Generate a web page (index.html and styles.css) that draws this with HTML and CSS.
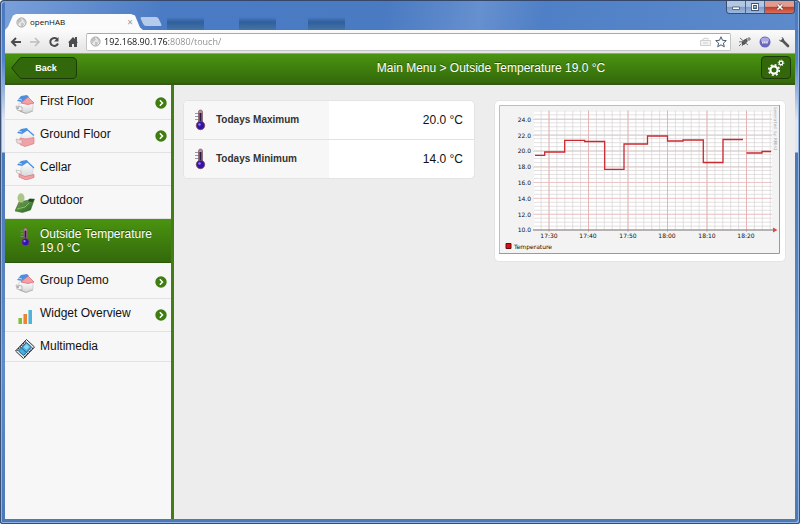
FILE: index.html
```html
<!DOCTYPE html>
<html lang="en">
<head>
    <meta charset="UTF-8">
    <meta name="viewport" content="width=device-width, initial-scale=1.0">
    <title>openHAB</title>
    <link rel="stylesheet" href="styles.css">
</head>
<body>
    <!-- shared icons -->
    <svg class="defs" width="0" height="0" aria-hidden="true">
        <defs>
            <linearGradient id="wall" x1="0" y1="0" x2="0" y2="1">
                <stop offset="0" stop-color="#ffffff"/>
                <stop offset="1" stop-color="#d3d6d8"/>
            </linearGradient>
            <linearGradient id="grass" x1="0" y1="0" x2="1" y2="1">
                <stop offset="0" stop-color="#7cb35a"/>
                <stop offset="1" stop-color="#235f22"/>
            </linearGradient>
        </defs>
        <symbol id="globe" viewBox="0 0 12 12">
            <circle cx="6" cy="6" r="5" fill="#e9e9e9" stroke="#9a9a9a"/>
            <path d="M2 3.2 4.5 2l1.6 1.3-1.3 1.9-1.7.6L2.5 8M7 2l2.5 1.6-.8 1.6 1.3 1M6 6.500l2.200.9-.8 2.200-1.300.5z" fill="#c2c2c2" stroke="#b0b0b0" stroke-width=".5"/>
        </symbol>
        <symbol id="arrow" viewBox="0 0 12 12">
            <circle cx="6" cy="6" r="5.700" fill="#3f7d10"/>
            <path d="M4.800 3.300 7.500 6 4.800 8.700" fill="none" stroke="#fff" stroke-width="1.500"/>
        </symbol>
        <symbol id="house-first" viewBox="0 0 20 20">
            <path d="M4 9l14-1v8l-8 3-6-2z" fill="url(#wall)" stroke="#bbb" stroke-width=".5"/>
            <path d="M2 7l4-5 6-1 2 2-7 5z" fill="#4a8fe0"/>
            <path d="M3 5l4 1" stroke="#b9d7f7" stroke-width="1"/>
            <path d="M6 9l7-6 6 6-6 1.500z" fill="#f2a2a7" stroke="#d8636c" stroke-width=".7"/>
            <path d="M1 12l6 1v4l-5-1z" fill="#f3f3f3" stroke="#999" stroke-width=".6"/>
            <path d="M2 14h2" stroke="#555" stroke-width=".8"/>
            <path d="M5 17l6 2.500 7-2.500" fill="none" stroke="#999" stroke-width=".7"/>
        </symbol>
        <symbol id="house-ground" viewBox="0 0 20 20">
            <path d="M6 8l7-5 5 6v8l-8 2-4-2z" fill="url(#wall)" stroke="#ccc" stroke-width=".5"/>
            <path d="M2 6l4-4 6-1 1 2-6 4z" fill="#4a8fe0"/>
            <path d="M3 4l4 1" stroke="#b9d7f7" stroke-width="1"/>
            <path d="M12 2.500 19 8.500" stroke="#4a8fe0" stroke-width="1.200"/>
            <path d="M5 11l6 1 8-1.500v6l-9 3-5-2z" fill="#f0a3a7" stroke="#d8737a" stroke-width=".6"/>
            <path d="M1 12l6 1v4l-5-1z" fill="#f6d5d6" stroke="#aaa" stroke-width=".6"/>
        </symbol>
        <symbol id="house-cellar" viewBox="0 0 20 20">
            <path d="M6 7l7-5 5 6v7l-8 2-4-2z" fill="url(#wall)" stroke="#ccc" stroke-width=".5"/>
            <path d="M2 5l4-4 6-1 1 2-6 4z" fill="#4a8fe0"/>
            <path d="M3 3l4 1" stroke="#b9d7f7" stroke-width="1"/>
            <path d="M12 1.500 19 8" stroke="#4a8fe0" stroke-width="1.200"/>
            <path d="M1 10l5 1v3l-4-1z" fill="#f3f3f3" stroke="#aaa" stroke-width=".6"/>
            <path d="M4 14l6 2.500 9-2v3l-8 2.500-7-3z" fill="#f0a3a7" stroke="#d8636c" stroke-width=".6"/>
        </symbol>
        <symbol id="garden" viewBox="0 0 20 20">
            <path d="M4 9l15.500-3-4 11-8 2.500L0 18z" fill="url(#grass)" stroke="#2c5a28" stroke-width=".5"/>
            <path d="M6 6v7" stroke="#8a6a3c" stroke-width="1.200"/>
            <ellipse cx="6" cy="5" rx="3.500" ry="4.700" fill="#adc688"/>
            <path d="M13 7l2-1.500 4 .5-1 3-4-.5z" fill="#214f20"/>
            <path d="M2 16l8-2 4-4" fill="none" stroke="#86c45e" stroke-width="1"/>
        </symbol>
        <symbol id="thermometer" viewBox="0 0 12 22">
            <path d="M1 4.500h4M1 7.500h4M1 10.500h4" stroke="#8b8b9c" stroke-width=".9"/>
            <path d="M4.500 3a2 2 0 0 1 4 0v11h-4z" fill="#b98c93" stroke="#75535e" stroke-width=".7"/>
            <path d="M6.500 4v12" stroke="#241a4b" stroke-width="2"/>
            <circle cx="6.500" cy="16.500" r="4.200" fill="#3213ad" stroke="#7c5159" stroke-width=".9"/>
            <circle cx="5.500" cy="15.500" r="1.300" fill="#8d7bf0"/>
        </symbol>
        <symbol id="bars" viewBox="0 0 20 20">
            <path d="M3 12h4v6H3z" fill="#7fc036"/>
            <path d="M8 8h4v10H8z" fill="#ee8330"/>
            <path d="M13 4h4v14h-4z" fill="#4eb4dd"/>
            <path d="M13 4h1v14h-1zM8 8h1v10H8zM3 12h1v6H3z" fill="#fff" opacity=".4"/>
        </symbol>
        <symbol id="film" viewBox="0 0 20 20">
            <path d="M11.500.5 19.500 8 8.500 19.500.5 12z" fill="#e8edf0" stroke="#2b3337" stroke-width="1"/>
            <path d="M10.500 2.500 2 11.500M18 9 9.500 18" stroke="#2b3337" stroke-width="1.500" stroke-dasharray="1.300 1"/>
            <path d="M11.500 3.500l5 4.500-8 8.500-5-4.500z" fill="#3fb0e8" stroke="#1e4c66" stroke-width=".9"/>
            <path d="M11.500 5l3 3-3 3-3-3z" fill="#8ad4f5"/>
            <path d="M6.500 9l5 4.500" stroke="#1e4c66" stroke-width=".8"/>
        </symbol>
    </svg>

    <div class="window">
        <header class="titlebar">
            <div class="tab">
                <svg class="icon-tab"><use href="#globe"/></svg>
                <span>openHAB</span>
                <button class="tab-close" aria-label="Close tab">×</button>
            </div>
            <button class="new-tab" aria-label="New tab"></button>
            <div class="window-buttons">
                <button aria-label="Minimize"><svg width="8" height="8"><path d="M.5 4h7v2.500h-7z" fill="#fff" stroke="#3d506e" stroke-width=".8"/></svg></button>
                <button aria-label="Maximize"><svg width="8" height="8"><path d="M1.500 1.500h5v5h-5z" fill="none" stroke="#3d506e" stroke-width="2.800"/><path d="M1.500 1.500h5v5h-5z" fill="none" stroke="#fff" stroke-width="1.200"/></svg></button>
                <button class="close" aria-label="Close"><svg width="8" height="8"><path d="M1.500 1.500l5 5m0-5-5 5" stroke="#6b3030" stroke-width="2.800"/><path d="M1.500 1.500l5 5m0-5-5 5" stroke="#fff" stroke-width="1.700"/></svg></button>
            </div>
        </header>

        <div class="toolbar">
            <button aria-label="Back"><svg width="12" height="12" fill="none" stroke="#4c4c4c" stroke-width="2"><path d="M11 6H2M6 2 2 6l4 4"/></svg></button>
            <button aria-label="Forward"><svg width="12" height="12" fill="none" stroke="#bdbdbd" stroke-width="1.500"><path d="M1 6h9M6 2l4 4-4 4"/></svg></button>
            <button aria-label="Reload"><svg width="12" height="12" fill="none" stroke="#4c4c4c" stroke-width="2"><path d="M9.500 3.500A4 4 0 1 0 10 7.500"/><path d="M10.500 1v4.500H6z" fill="#4c4c4c" stroke="none"/></svg></button>
            <button aria-label="Home"><svg width="12" height="12"><path d="M6 1 1 6.500h1V11h3V8h2v3h3V6.500h1l-1-1V1H8v2z" fill="#4c4c4c"/></svg></button>
            <div class="address">
                <svg class="icon-tab"><use href="#globe"/></svg>
                <input type="text" aria-label="Address" value="192.168.90.176:8080/touch/">
                <svg width="13" height="10"><path d="M1.500 3.500h10v5h-10zM3 3l3-2 4 1" fill="#f3f3f3" stroke="#d0d0d0"/><path d="M4 6h5" stroke="#d8cfcf"/></svg>
                <svg width="12" height="12"><path d="M6 .8l1.500 3.500 3.800.3-2.900 2.500.9 3.700L6 8.800l-3.300 2 .9-3.700L.7 4.600l3.800-.3z" fill="#fff" stroke="#485a70"/></svg>
            </div>
            <button aria-label="Bug extension"><svg width="14" height="12"><ellipse cx="6.500" cy="6" rx="2" ry="3.500" transform="rotate(40 6.500 6)" fill="#4a4a4a"/><path d="M2 2l8 7M1 6l9-1M4 10l5-8M11 1v4M9 3h4M3 8l-2 2" stroke="#666" stroke-width=".9"/></svg></button>
            <button aria-label="Web extension"><svg width="12" height="12"><circle cx="6" cy="6" r="5.500" fill="#6a66bd"/><ellipse cx="6" cy="4" rx="4" ry="2.600" fill="#aaa8e4"/><path d="M3 6.500h6" stroke="#e7e7fa" stroke-width="2" stroke-dasharray="1.500 .6"/></svg></button>
            <button aria-label="Settings"><svg width="12" height="12"><path d="M4.500 4.500 10 10" stroke="#555" stroke-width="2.600" stroke-linecap="round"/><path d="M1 3.500l2 1 1.500-1.500-1-2A3.500 3.500 0 0 1 6 5.500 3.300 3.300 0 0 1 1 3.500z" fill="#555"/></svg></button>
        </div>

        <div class="app-bar">
            <button class="back">
                <svg width="66" height="22"><path d="M.7 11 8.500 1.500Q9.500.5 11 .5h50q4.500 0 4.500 4.500v12q0 4.500-4.500 4.500H11q-1.500 0-2.500-1z" fill="#32670c" stroke="#1c3b06"/></svg>
                <span>Back</span>
            </button>
            <h1>Main Menu &gt; Outside Temperature 19.0 °C</h1>
            <button class="settings" aria-label="Settings">
                <svg width="18" height="18" fill="none" stroke="#fff">
                    <circle cx="7" cy="11" r="3.600" stroke-width="2.200"/>
                    <circle cx="7" cy="11" r="5.300" stroke-width="1.600" stroke-dasharray="2 2.160"/>
                    <circle cx="14" cy="4" r="1.800" stroke-width="1.300"/>
                    <circle cx="14" cy="4" r="2.800" stroke-width="1" stroke-dasharray="1.100 1.100"/>
                </svg>
            </button>
        </div>

        <div class="page">
            <nav class="sidebar">
                <a href="#"><svg class="icon"><use href="#house-first"/></svg><span>First Floor</span><svg class="more"><use href="#arrow"/></svg></a>
                <a href="#"><svg class="icon"><use href="#house-ground"/></svg><span>Ground Floor</span><svg class="more"><use href="#arrow"/></svg></a>
                <a href="#"><svg class="icon"><use href="#house-cellar"/></svg><span>Cellar</span></a>
                <a href="#"><svg class="icon"><use href="#garden"/></svg><span>Outdoor</span></a>
                <a href="#" class="active"><svg class="icon"><use href="#thermometer"/></svg><span>Outside Temperature 19.0 °C</span></a>
                <a href="#"><svg class="icon"><use href="#house-first"/></svg><span>Group Demo</span><svg class="more"><use href="#arrow"/></svg></a>
                <a href="#"><svg class="icon"><use href="#bars"/></svg><span>Widget Overview</span><svg class="more"><use href="#arrow"/></svg></a>
                <a href="#"><svg class="icon"><use href="#film"/></svg><span>Multimedia</span></a>
            </nav>

            <main class="content">
                <dl class="card readings">
                    <div class="reading">
                        <dt><svg class="probe"><use href="#thermometer"/></svg>Todays Maximum</dt>
                        <dd>20.0 °C</dd>
                    </div>
                    <div class="reading">
                        <dt><svg class="probe"><use href="#thermometer"/></svg>Todays Minimum</dt>
                        <dd>14.0 °C</dd>
                    </div>
                </dl>

                <div class="card chart">
                    <svg viewBox="0 0 281 149" role="img" aria-label="Temperature chart">
                        <defs>
                            <pattern id="minor" x="2.100" y="1.400" width="7.900" height="3.975" patternUnits="userSpaceOnUse">
                                <path d="M0 .5h7.900M.5 0v3.975" stroke="#d6d3d3" stroke-width=".7"/>
                            </pattern>
                        </defs>
                        <path d="M.5 148.500V.5h280" fill="none" stroke="#bdbdbd"/>
                        <path d="M0 148.500h280.500V0" fill="none" stroke="#9a9a9a"/>
                        <path d="M35 5.500h238V125H35z" fill="#fff"/>
                        <path d="M35 5.500h238V125H35z" fill="url(#minor)"/>
                        <!-- major grid: 2 degrees / 10 minutes -->
                        <path d="M34 14.500h239M34 30.400h239M34 46.300h239M34 62.200h239M34 77.500h239M34 93.400h239M34 109.300h239" stroke="#efbcbc" stroke-width=".7"/>
                        <path d="M50 5.500V127M89.500 5.500V127M129 5.500V127M168.500 5.500V127M208 5.500V127M247.500 5.500V127" stroke="#e9a9a9" stroke-width=".8"/>
                        <path d="M34 125h241" stroke="#7d7474" stroke-width="1.200"/>
                        <path d="M274 122.500l4.500 2.500-4.500 2.500z" fill="#d94b4b"/>
                        <path class="series" d="M36 50.300h9.700V47h20V35.300h20v1.200h20v27.800H125V39h23.500v-8h20v5h15.500v-1h20.300v22.500H224v-23h20M247.500 48H263v-1.500h9"/>
                        <g class="axis" text-anchor="end">
                            <text x="32" y="17">24.0</text>
                            <text x="32" y="33">22.0</text>
                            <text x="32" y="48">20.0</text>
                            <text x="32" y="64">18.0</text>
                            <text x="32" y="80">16.0</text>
                            <text x="32" y="96">14.0</text>
                            <text x="32" y="112">12.0</text>
                            <text x="32" y="127">10.0</text>
                        </g>
                        <g class="axis" text-anchor="middle">
                            <text x="50" y="133">17:30</text>
                            <text x="89" y="133">17:40</text>
                            <text x="129" y="133">17:50</text>
                            <text x="168" y="133">18:00</text>
                            <text x="208" y="133">18:10</text>
                            <text x="247" y="133">18:20</text>
                        </g>
                        <text class="credit" transform="translate(275 2) rotate(90)">Generated by RRD4J</text>
                        <path d="M7 138.500h5v5H7z" fill="#dd1010" stroke="#601010"/>
                        <text class="axis" x="15" y="144">Temperature</text>
                    </svg>
                </div>
            </main>
        </div>
    </div>
</body>
</html>
```

FILE: styles.css
```css
* {
    box-sizing: border-box;
}
body {
    margin: 0;
    font-family: "Liberation Sans", Arial, sans-serif;
    font-size: 12px;
    line-height: 14px;
    color: #111;
}
button {
    display: flex;
    align-items: center;
    justify-content: center;
    padding: 0;
    border: 0;
    background: none;
    font-family: inherit;
}
.defs {
    position: absolute;
}

/* browser window */
.window {
    display: flex;
    flex-direction: column;
    min-height: 100vh;
    padding: 0 5px 5px;
    border: solid #34496a;
    border-width: 1px 0 0;
    border-radius: 4px 4px 3px 3px;
    background: linear-gradient(#4a78be 0, #5583c8 60px, #dfe7f2 120px, #dfe7f2 151px, #4c78b6 152px, #5f8cc8 70%, #4b79b6);
    box-shadow: inset 1px 0 #3a5175, inset -1px 0 #3a5175, inset 0 -1px #31507b, inset 2px 1px #8fb2e2, inset -2px -2px #8fb2e2;
}
.titlebar {
    display: flex;
    align-items: flex-end;
    height: 29px;
    /* blurred desktop icons behind the glass */
    background:
        linear-gradient(transparent, #2f5f9c 40%, #4673a5) 162px 16px / 37px 13px no-repeat,
        linear-gradient(transparent, #2f5f9c 40%, #4673a5) 234px 16px / 37px 13px no-repeat,
        linear-gradient(transparent, #2f5f9c 40%, #4673a5) 303px 16px / 37px 13px no-repeat,
        linear-gradient(100deg, #7aa0da 0, #4b7bc4 20%, #4a7ac2 48%, #6690cf 60%, #4f7fc6 68%, #5c8acb);
}
.tab {
    display: flex;
    align-items: center;
    gap: 3px;
    width: 138px;
    height: 16px;
    padding: 0 10px 0 11px;
    background: #fbfbfb;
    clip-path: polygon(0 100%, 3px 80%, 8px 10%, 11px 0, 126px 0, 130px 10%, 135px 85%, 100% 100%);
    font-family: "Open Sans", sans-serif;
    font-size: 8px;
}
.icon-tab {
    width: 11px;
    height: 11px;
}
.tab-close {
    margin-left: auto;
    color: #999;
    font-size: 10px;
}
.new-tab {
    width: 18px;
    height: 9px;
    margin: 0 0 4px -1px;
    border-radius: 2px;
    background: #b4cbea;
    transform: skewX(25deg);
}
.window-buttons {
    display: flex;
    align-self: flex-start;
    height: 13px;
    margin-left: auto;
    border: solid #3a4d70;
    border-width: 0 1px 1px;
    border-radius: 0 0 4px 4px;
    overflow: hidden;
}
.window-buttons button {
    width: 19px;
    border-right: 1px solid #4d638b;
    background: linear-gradient(#b3c6e2 45%, #7f9dca 50%, #9db9e0);
}
.window-buttons .close {
    width: 29px;
    border-right: 0;
    background: linear-gradient(#e09c8d 45%, #c03c2b 50%, #d5705a);
}

.toolbar {
    display: flex;
    align-items: center;
    gap: 7px;
    height: 23px;
    padding: 0 5px;
    background: linear-gradient(#fbfbfb, #e3e3e3);
}
.address {
    display: flex;
    flex: 1;
    align-items: center;
    gap: 3px;
    height: 18px;
    padding: 0 3px;
    border: 1px solid #c4c4c4;
    border-top-color: #a9a9a9;
    border-radius: 2px;
    background: #fff;
}
.address input {
    flex: 1;
    min-width: 0;
    padding: 0;
    border: 0;
    /* host dark, port and path grey */
    background: linear-gradient(90deg, #111 65px, #8b8b8b 65px);
    -webkit-background-clip: text;
    background-clip: text;
    color: transparent;
    font-family: "Open Sans", sans-serif;
    font-size: 9px;
}

/* openHAB header */
.app-bar {
    display: flex;
    align-items: center;
    height: 32px;
    padding: 0 4px 2px 6px;
    border-top: 1px solid #8aae6c;
    border-bottom: 2px solid #3a551f;
    background: linear-gradient(#4a9410, #33690b);
}
.back {
    display: grid;
    width: 66px;
    height: 22px;
    color: #fff;
    font-size: 9px;
    font-weight: bold;
}
.back > * {
    grid-area: 1 / 1;
}
.back span {
    padding-left: 4px;
}
.app-bar h1 {
    flex: 1;
    margin: 0;
    padding-left: 144px;
    color: #fff;
    font-size: 12px;
    font-weight: normal;
    text-align: center;
    text-shadow: 0 -1px #2a5509;
}
.settings {
    width: 30px;
    height: 23px;
    border: 1px solid #1c3b06;
    border-radius: 4px;
    background: #32670c;
}

.page {
    display: flex;
    flex: 1;
    background: #ededed;
}
.sidebar {
    flex: none;
    width: 169px;
    padding-top: 2px;
    border-right: 3px solid #447c17;
    background: #f7f7f7;
}
.sidebar a {
    display: flex;
    align-items: flex-start;
    min-height: 33px;
    padding: 7px 4px 0 10px;
    border-bottom: 1px solid #e2e2e2;
    color: #111;
    text-decoration: none;
}
.sidebar a:last-child {
    min-height: 30px;
}
.sidebar span {
    flex: 1;
    padding-left: 5px;
}
.icon {
    width: 20px;
    height: 20px;
}
.more {
    width: 12px;
    height: 12px;
    margin-top: 3px;
}
.sidebar .active {
    min-height: 44px;
    margin-bottom: 3px;
    padding-top: 8px;
    border-bottom: 1px solid #2b590a;
    background: linear-gradient(#4a9410, #33690b);
    color: #fff;
    text-shadow: 0 -1px #2a5509;
}

.content {
    display: grid;
    flex: 1;
    grid-template-columns: 1fr 1fr;
    gap: 19px;
    align-items: start;
    padding: 15px 9px;
}
.card {
    margin: 0;
    border: 1px solid #e4e4e4;
    border-radius: 5px;
    background: #fff;
    overflow: hidden;
}
.reading {
    display: flex;
    height: 38px;
}
.reading + .reading {
    height: 39px;
    border-top: 1px solid #e2e2e2;
}
.reading dt,
.reading dd {
    display: flex;
    flex: 1;
    align-items: center;
    margin: 0;
}
.reading dt {
    gap: 10px;
    padding-left: 10px;
    background: #f7f7f7;
    color: #333;
    font-size: 10px;
    font-weight: bold;
}
.reading dd {
    justify-content: flex-end;
    padding-right: 11px;
}
.probe {
    width: 12px;
    height: 22px;
}
.chart {
    padding: 4px 5px 7px 4px;
}
.chart svg {
    display: block;
    width: 100%;
    background: #f3f3f3;
}
.axis {
    font-family: "DejaVu Sans", sans-serif;
    font-size: 6px;
    fill: #111;
}
.credit {
    font-family: "DejaVu Sans Mono", monospace;
    font-size: 4px;
    fill: #a5a5a5;
}
.series {
    fill: none;
    stroke: #c92a30;
    stroke-width: 1.3;
}
```
